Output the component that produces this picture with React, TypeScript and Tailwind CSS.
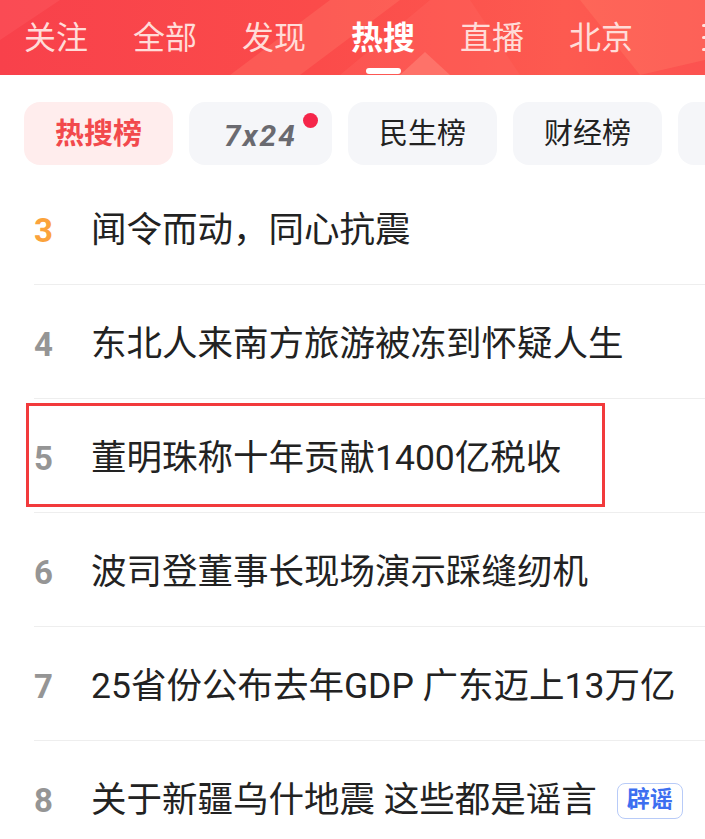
import React from 'react';

const FONT = { fontFamily: 'Roboto, "Noto Sans CJK SC", sans-serif' };

const tabs = ['关注', '全部', '发现', '热搜', '直播', '北京'];

const chips = [
  { id: 'hot', label: '热搜榜', w: 'w-[149px]', active: true },
  { id: '724', label: '7x24', w: 'w-[143px]', dot: true },
  { id: 'ms', label: '民生榜', w: 'w-[149px]' },
  { id: 'cj', label: '财经榜', w: 'w-[149px]' },
  { id: 'more', label: '', w: 'w-[149px]' },
];

const rows = [
  { rank: 3, title: '闻令而动，同心抗震' },
  { rank: 4, title: '东北人来南方旅游被冻到怀疑人生' },
  { rank: 5, title: '董明珠称十年贡献1400亿税收', marked: true },
  { rank: 6, title: '波司登董事长现场演示踩缝纫机' },
  { rank: 7, title: '25省份公布去年GDP 广东迈上13万亿' },
  { rank: 8, title: '关于新疆乌什地震 这些都是谣言', tag: '辟谣' },
];

function HeaderBg() {
  // soft triangles on the red banner
  return (
    <svg className="absolute inset-0 h-full w-full" viewBox="0 0 705 75" preserveAspectRatio="none">
      <defs>
        <linearGradient id="hb" x1="0" y1="0" x2="1" y2="0">
          <stop offset="0" stopColor="#f8414b" />
          <stop offset="0.45" stopColor="#fb4b4a" />
          <stop offset="0.8" stopColor="#fd5a50" />
          <stop offset="1" stopColor="#fc5250" />
        </linearGradient>
      </defs>
      <rect width="705" height="75" fill="url(#hb)" />
      <polygon points="230,75 330,0 400,0 300,75" fill="#ff7a6a" opacity="0.35" />
      <polygon points="340,75 430,0 470,0 520,75" fill="#ff6b63" opacity="0.3" />
      <polygon points="400,75 425,52 450,75" fill="#ff8c80" opacity="0.5" />
      <polygon points="580,0 705,0 705,60 640,75" fill="#ff7d66" opacity="0.35" />
      <polygon points="0,0 60,0 0,40" fill="#ff6a70" opacity="0.25" />
    </svg>
  );
}

export default function App() {
  return (
    <div className="h-[839px] w-[705px] overflow-hidden bg-white" style={FONT}>
      {/* top channel tabs */}
      <div className="relative h-[75px] overflow-hidden">
        <HeaderBg />
        <div className="relative flex gap-[45px] pl-[24px] whitespace-nowrap">
          {tabs.map((t) => {
            const active = t === '热搜';
            return (
              <div key={t} className="flex flex-col items-center">
                <span
                  className={`pt-[22px] text-[32px] leading-[32px] ${
                    active ? 'font-bold text-white' : 'text-[#ffdcd8]'
                  }`}
                >
                  {t}
                </span>
                {active && <span className="mt-[14px] h-[6px] w-[35px] rounded-full bg-white" />}
              </div>
            );
          })}
        </div>
        {/* menu icon, mostly off screen */}
        <svg className="absolute left-[702px] top-[23px]" width="30" height="30" viewBox="0 0 30 30">
          <rect x="0" y="1" width="30" height="3" rx="1.5" fill="#ffe2de" />
          <rect x="0" y="13" width="30" height="3" rx="1.5" fill="#ffe2de" />
          <rect x="0" y="25" width="30" height="3" rx="1.5" fill="#ffe2de" />
        </svg>
      </div>

      {/* board chips */}
      <div className="flex gap-[16px] overflow-hidden pl-[24px] pt-[27px]">
        {chips.map((c) => (
          <div
            key={c.id}
            className={`relative flex h-[63px] shrink-0 items-center justify-center rounded-[16px] ${c.w} ${
              c.active ? 'bg-[#ffeded]' : 'bg-[#f5f6f9]'
            }`}
          >
            {c.id === '724' ? (
              <span className="pt-[4px] text-[30px] font-bold italic tracking-[2px] text-[#6a6a70]">7x24</span>
            ) : (
              c.label && (
                <span
                  className={`pt-[3px] text-[29px] ${c.active ? 'font-bold text-[#f2494c]' : 'text-[#222]'}`}
                >
                  {c.label}
                </span>
              )
            )}
            {c.dot && (
              <span className="absolute left-[114px] top-[11px] h-[15px] w-[15px] rounded-full bg-[#f5264a]" />
            )}
          </div>
        ))}
      </div>

      {/* hot list */}
      <div className="mt-[6px]">
        {rows.map((r) => (
          <div key={r.rank} className="relative pl-[34px]">
            <div className="flex h-[114px] items-center border-b border-[#eeeeee] pt-[6px]">
              <span
                className={`w-[57px] shrink-0 text-[33px] font-bold ${
                  r.rank <= 3 ? 'text-[#fba33b]' : 'text-[#959595]'
                }`}
              >
                {r.rank}
              </span>
              <span className="whitespace-nowrap text-[35.5px] text-[#222222]">{r.title}</span>
              {r.tag && (
                <span className="ml-[20px] flex h-[36px] w-[66px] items-center justify-center rounded-[8px] border-[1.5px] border-[#b8cbf8] text-[23px] font-bold text-[#3d6ff0]">
                  {r.tag}
                </span>
              )}
            </div>
            {r.marked && (
              <div className="pointer-events-none absolute left-[26px] top-[4px] h-[104px] w-[579px] border-[3px] border-[#f23a3c]" />
            )}
          </div>
        ))}
      </div>
    </div>
  );
}
